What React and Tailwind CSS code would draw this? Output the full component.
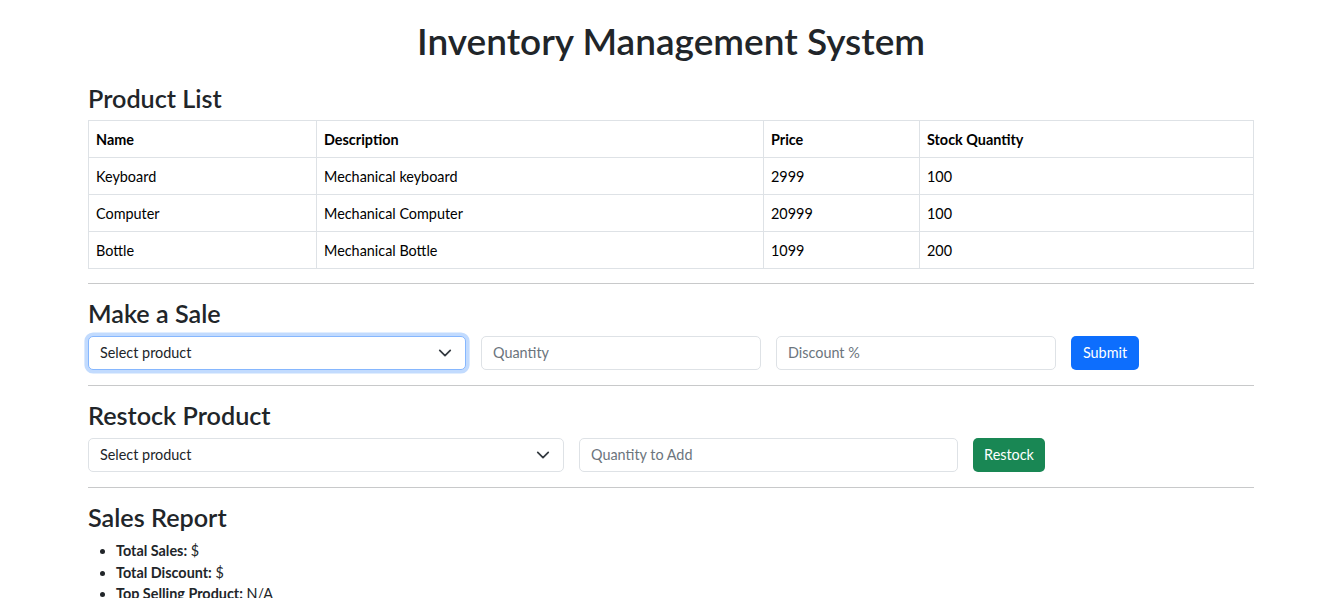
import React from "react";

function Chevron() {
  return (
    <svg width="14" height="14" viewBox="0 0 16 16" className="shrink-0">
      <path d="m2 5 6 6 6-6" fill="none" stroke="#343a40" strokeWidth="2" strokeLinecap="round" strokeLinejoin="round" />
    </svg>
  );
}

function SelectBox({ width, focused }) {
  return (
    <div
      className={
        "h-[34px] flex items-center justify-between pl-[11px] pr-[13px] bg-white rounded-[5px] border " +
        width +
        (focused
          ? " border-[#86b7fe] shadow-[0_0_0_3.6px_rgba(13,110,253,0.25)]"
          : " border-[#dee2e6]")
      }
    >
      <span>Select product</span>
      <Chevron />
    </div>
  );
}

function Field({ width, placeholder }) {
  return (
    <input
      placeholder={placeholder}
      className={
        "h-[34px] px-[11px] bg-white rounded-[5px] border border-[#dee2e6] outline-none placeholder:text-[#6c757d] text-[14.4px] " +
        width
      }
    />
  );
}

const products = [
  ["Keyboard", "Mechanical keyboard", "2999", "100"],
  ["Computer", "Mechanical Computer", "20999", "100"],
  ["Bottle", "Mechanical Bottle", "1099", "200"],
];

export default function App() {
  return (
    <div className="min-h-[598px] bg-white font-['Lato','Liberation_Sans',sans-serif] text-[14.4px] leading-[21.6px] text-[#212529]">
      <div className="w-[1166px] ml-[88px] pt-[19px]">
        <h1 className="text-[37px] leading-[43.2px] font-semibold text-center mb-[21px]">
          Inventory Management System
        </h1>

        <h3 className="text-[25.2px] leading-[30.2px] font-semibold mb-[7px]">Product List</h3>
        <table className="w-full border-collapse text-black">
          <thead>
            <tr className="h-[37px]">
              <th className="w-[228px] border border-[#dee2e6] px-[7px] py-0 text-left font-bold">Name</th>
              <th className="w-[447px] border border-[#dee2e6] px-[7px] py-0 text-left font-bold">Description</th>
              <th className="w-[156px] border border-[#dee2e6] px-[7px] py-0 text-left font-bold">Price</th>
              <th className="border border-[#dee2e6] px-[7px] py-0 text-left font-bold">Stock Quantity</th>
            </tr>
          </thead>
          <tbody>
            {products.map((p) => (
              <tr key={p[0]} className="h-[37px]">
                {p.map((c, i) => (
                  <td key={i} className="border border-[#dee2e6] px-[7px] py-0">
                    {c}
                  </td>
                ))}
              </tr>
            ))}
          </tbody>
        </table>

        <hr className="mt-[14px] mb-[14px] border-0 border-t border-[#c8c9ca]" />

        <h3 className="text-[25.2px] leading-[30.2px] font-semibold mb-[7px]">Make a Sale</h3>
        <div className="flex items-center gap-[15px]">
          <SelectBox width="w-[378px]" focused />
          <Field width="w-[280px]" placeholder="Quantity" />
          <Field width="w-[280px]" placeholder="Discount %" />
          <button className="h-[34px] w-[68px] rounded-[5px] bg-[#0d6efd] text-white">Submit</button>
        </div>

        <hr className="mt-[15px] mb-[14px] border-0 border-t border-[#c8c9ca]" />

        <h3 className="text-[25.2px] leading-[30.2px] font-semibold mb-[8px]">Restock Product</h3>
        <div className="flex items-center gap-[15px]">
          <SelectBox width="w-[476px]" />
          <Field width="w-[379px]" placeholder="Quantity to Add" />
          <button className="h-[34px] w-[72px] rounded-[5px] bg-[#198754] text-white">Restock</button>
        </div>

        <hr className="mt-[15px] mb-[14px] border-0 border-t border-[#c8c9ca]" />

        <h3 className="text-[25.2px] leading-[30.2px] font-semibold mb-[8px]">Sales Report</h3>
        <ul className="list-disc pl-[28px]">
          <li>
            <strong className="font-bold">Total Sales:</strong> $
          </li>
          <li>
            <strong className="font-bold">Total Discount:</strong> $
          </li>
          <li>
            <strong className="font-bold">Top Selling Product:</strong> N/A
          </li>
        </ul>
      </div>
    </div>
  );
}
